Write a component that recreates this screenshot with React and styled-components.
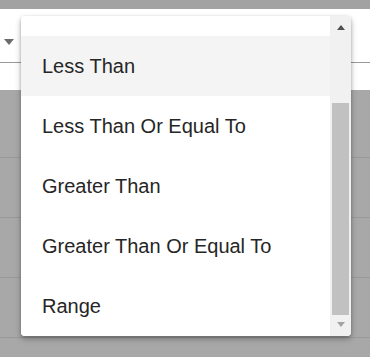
import React from "react";
import styled, { createGlobalStyle } from "styled-components";

const Global = createGlobalStyle`
  html, body { margin: 0; padding: 0; }
  body { background: #a8a8a8; font-family: "Liberation Sans", Arial, sans-serif; overflow: hidden; }
`;

const Page = styled.div`
  position: relative;
  width: 370px;
  height: 357px;
  overflow: hidden;
  background: #a8a8a8;
`;

const TopBar = styled.div`
  height: 9px;
  background: #a2a2a2;
`;

const Header = styled.div`
  height: 81px;
  background: #ffffff;
  display: flex;
  flex-direction: column;
`;

const Field = styled.div`
  height: 54px;
  border-bottom: 1px solid #9a9a9a;
  display: flex;
  align-items: center;
  padding-left: 4px;
  padding-top: 2px;
  box-sizing: border-box;
`;

const Caret = styled.div`
  width: 0;
  height: 0;
  border-left: 5.5px solid transparent;
  border-right: 5.5px solid transparent;
  border-top: 6px solid #6b6b6b;
  margin-top: 10px;
`;

const Row = styled.div`
  height: ${(p) => p.$h}px;
  border-bottom: 1px solid #999999;
  box-sizing: border-box;
`;

const Panel = styled.div`
  position: absolute;
  left: 21px;
  top: 16px;
  width: 330px;
  height: 320px;
  background: #ffffff;
  border-radius: 4px;
  box-shadow: 0 3px 6px rgba(0, 0, 0, 0.28), 0 1px 3px rgba(0, 0, 0, 0.2);
  display: flex;
  overflow: hidden;
`;

const List = styled.div`
  flex: 1;
  overflow: hidden;
`;

const Items = styled.ul`
  list-style: none;
  margin: -40px 0 0 0;
  padding: 0;
`;

const Item = styled.li`
  height: 60px;
  display: flex;
  align-items: center;
  padding-left: 21px;
  font-size: 20px;
  color: #262626;
  background: ${(p) => (p.$active ? "#f4f4f4" : "#ffffff")};
`;

const ScrollBar = styled.div`
  width: 21px;
  background: #f1f1f1;
  display: flex;
  flex-direction: column;
  align-items: center;
`;

const ArrowBtn = styled.div`
  height: ${(p) => p.$h}px;
  display: flex;
  align-items: ${(p) => (p.$down ? "flex-start" : "center")};
  justify-content: center;
  width: 100%;
  padding-top: ${(p) => (p.$down ? 7 : 0)}px;
  box-sizing: border-box;
`;

const Tri = styled.div`
  width: 0;
  height: 0;
  border-left: 4.5px solid transparent;
  border-right: 4.5px solid transparent;
  ${(p) =>
    p.$down
      ? `border-top: 5px solid ${p.$color};`
      : `border-bottom: 5px solid ${p.$color};`}
`;

const Track = styled.div`
  flex: 1;
  width: 100%;
  display: flex;
  flex-direction: column;
  padding-top: 65px;
  box-sizing: border-box;
`;

const Thumb = styled.div`
  height: 212px;
  margin: 0 2px 0 2px;
  background: #c1c1c1;
`;

const options = [
  "Equal To",
  "Less Than",
  "Less Than Or Equal To",
  "Greater Than",
  "Greater Than Or Equal To",
  "Range",
];

export default function App() {
  return (
    <Page>
      <Global />
      <TopBar />
      <Header>
        <Field>
          <Caret />
        </Field>
      </Header>
      <Row $h={68} />
      <Row $h={60} />
      <Row $h={60} />
      <Row $h={60} />
      <Panel>
        <List>
          <Items>
            {options.map((o, i) => (
              <Item key={o} $active={i === 1}>
                {i === 0 ? "" : o}
              </Item>
            ))}
          </Items>
        </List>
        <ScrollBar>
          <ArrowBtn $h={22}>
            <Tri $color="#505050" />
          </ArrowBtn>
          <Track>
            <Thumb />
          </Track>
          <ArrowBtn $h={21} $down>
            <Tri $down $color="#a3a3a3" />
          </ArrowBtn>
        </ScrollBar>
      </Panel>
    </Page>
  );
}
